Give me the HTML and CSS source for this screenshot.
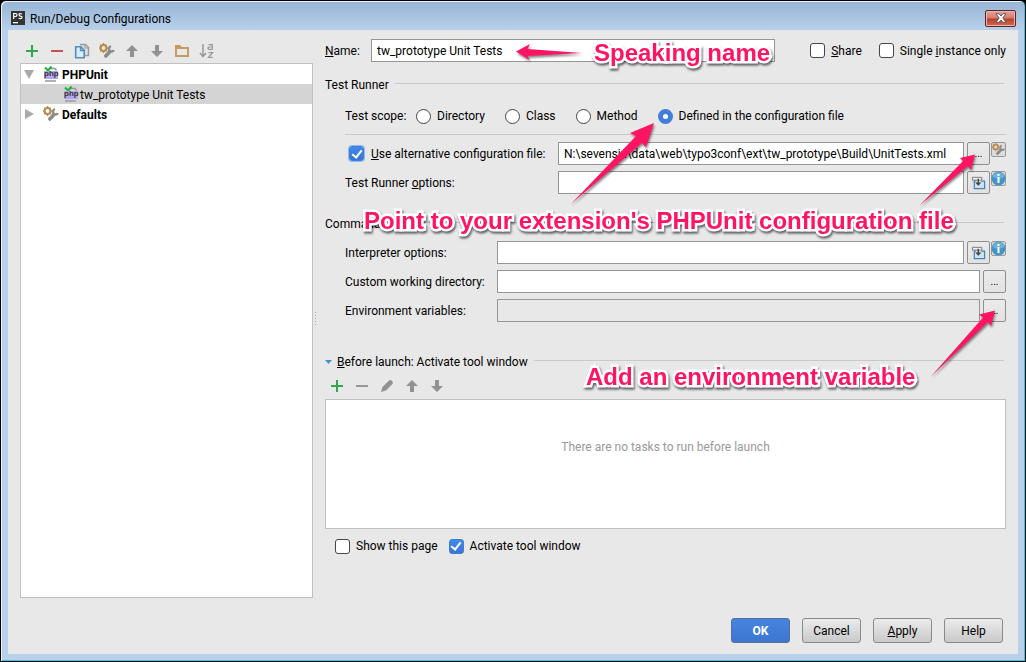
FILE: index.html
```html
<!DOCTYPE html>
<html lang="en">
<head>
<meta charset="utf-8">
<title>Run/Debug Configurations</title>
<link rel="stylesheet" href="styles.css">
</head>
<body>
<svg class="defs" aria-hidden="true">
  <symbol id="i-plus" viewBox="0 0 16 16"><path d="M7 2h2v5h5v2H9v5H7V9H2V7h5z" fill="#2fa64f"/></symbol>
  <symbol id="i-minus" viewBox="0 0 16 16"><path d="M2 7h12v2H2z" fill="currentColor"/></symbol>
  <symbol id="i-copy" viewBox="0 0 16 16"><path d="M6 1.500h5.500l3 3v8H11" fill="#dedede" stroke="#9a9a9a" stroke-width="1.500"/><path d="M11 1.500v3.500h3.500" fill="none" stroke="#9a9a9a"/><path d="M1.700 3.700h5l3.500 3.500v7.600H1.700z" fill="#dcebf5" stroke="#4f8fbd" stroke-width="1.600"/><path d="M6.500 4v3.500H10" fill="none" stroke="#4f8fbd" stroke-width="1.300"/></symbol>
  <symbol id="i-wrench" viewBox="0 0 16 16"><path d="M6.800 13 10.500 9" stroke="#8b8b8b" stroke-width="3.600" stroke-linecap="round"/><path d="M12 3.200a2.700 2.700 0 1 0 3 4" fill="none" stroke="#8b8b8b" stroke-width="2.400"/><circle cx="4.500" cy="5" r="2.900" fill="none" stroke="#b98c4c" stroke-width="2"/><path d="M4.500 0v2M4.500 8v2M0 5h1.500M7.500 5H9M1.300 1.800l1.100 1.100M6.600 7.100l1.100 1.100M7.700 1.800 6.600 2.900M2.400 7.100 1.300 8.200" stroke="#b98c4c" stroke-width="1.500"/></symbol>
  <symbol id="i-up" viewBox="0 0 16 16"><path d="M8 2 14 8H10v6H6V8H2z" fill="#929292"/></symbol>
  <symbol id="i-down" viewBox="0 0 16 16"><path d="M8 14 2 8h4V2h4v6h4z" fill="#929292"/></symbol>
  <symbol id="i-folder" viewBox="0 0 16 16"><path d="M1 2h5.500l1 2H15v10H1zM3 6v6h10V6z" fill="#c79a60" fill-rule="evenodd"/></symbol>
  <symbol id="i-sort" viewBox="0 0 16 16"><path d="M4 1v12M1 10l3 3.500L7 10" fill="none" stroke="#999" stroke-width="1.500"/><path d="M9.500 1.700h3.800v4.600H10a1 1 0 0 1-1-1V4.800q0-.8 1-.8h3.300M9.500 9.700h4l-4 4.600h4.300" fill="none" stroke="#999" stroke-width="1.200"/></symbol>
  <symbol id="i-pencil" viewBox="0 0 16 16"><path d="M2 14l1.500-5L10 2.500q1.500-1 3 .5t.5 3L7 12.500z" fill="#929292"/></symbol>
  <symbol id="i-expand" viewBox="0 0 16 16"><path d="M1.500 2.500h10v3h-10z" fill="#f0f0f0" stroke="#777"/><path d="M5 6.500H3.500v8h11v-8H11" fill="#cfe1ec" stroke="#3f86b5" stroke-width="1.300"/><path d="M7 4h1.500v4H11l-3.200 3.500L4.500 8H7z" fill="#444"/></symbol>
  <symbol id="i-info" viewBox="0 0 15 15"><rect x=".5" y=".5" width="14" height="14" rx="1.500" fill="#ddd" stroke="#999"/><circle cx="7.500" cy="7.500" r="6.900" fill="#4394c6"/><path d="M1.500 6a6.200 6.200 0 0 1 12 0q-6 3-12 0" fill="#6db0d8"/><path d="M6.500 3h2v2h-2zM6.500 6h2v6h-2z" fill="#fff"/></symbol>
  <symbol id="i-php" viewBox="0 0 14 16"><path d="M5 2.500h6l1.500 2M1 15h11" fill="none" stroke="#999" stroke-width="1.600"/><path d="M1 1.500 4 4.500 7.500.5" fill="none" stroke="#12b92b" stroke-width="2"/><path d="M0 5h14v8H0z" fill="#b4a7f0"/></symbol>
</svg>

<main class="window">
  <header class="titlebar">
    <svg class="logo" viewBox="0 0 14 14"><rect width="14" height="14" fill="#343434"/><path d="M2.700 8V2.500h1.800a1.500 1.500 0 0 1 0 3H2.700M11 3q-3-1-3 .6t2 1.700q1.800.6.700 1.900-1.300.7-3 0" fill="none" stroke="#fff" stroke-width="1.200"/><path d="M2 11h5v1.300H2z" fill="#fff"/></svg>
    <h1 class="title">Run/Debug Configurations</h1>
    <button class="close" aria-label="Close"><svg viewBox="0 0 12 10" width="12" height="10"><path d="M1 .7h3L6 3 8 .7h3L7.800 5 11 9.300H8L6 7 4 9.300H1L4.200 5z" fill="#fff" stroke="#555a68" stroke-width="1"/></svg></button>
  </header>

  <section class="client">
    <div class="body">
      <aside class="sidebar">
        <div class="toolbar">
          <button class="tool" aria-label="Add"><svg><use href="#i-plus"/></svg></button>
          <button class="tool tool-red" aria-label="Remove"><svg><use href="#i-minus"/></svg></button>
          <button class="tool" aria-label="Copy"><svg><use href="#i-copy"/></svg></button>
          <button class="tool" aria-label="Edit defaults"><svg><use href="#i-wrench"/></svg></button>
          <button class="tool" aria-label="Move up"><svg><use href="#i-up"/></svg></button>
          <button class="tool" aria-label="Move down"><svg><use href="#i-down"/></svg></button>
          <button class="tool" aria-label="New folder"><svg><use href="#i-folder"/></svg></button>
          <button class="tool" aria-label="Sort"><svg><use href="#i-sort"/></svg></button>
        </div>
        <ul class="tree">
          <li class="node node-group"><span class="twisty twisty-open"></span><span class="php-icon"><svg class="php-mark"><use href="#i-php"/></svg><span class="php-text">php</span></span><span class="node-text">PHPUnit</span></li>
          <li class="node node-child"><span class="php-icon"><svg class="php-mark"><use href="#i-php"/></svg><span class="php-text">php</span></span><span class="node-text">tw_prototype Unit Tests</span></li>
          <li class="node node-group"><span class="twisty twisty-closed"></span><svg class="node-icon"><use href="#i-wrench"/></svg><span class="node-text">Defaults</span></li>
        </ul>
      </aside>
      <div class="splitter"></div>

      <form class="panel">
        <div class="row name-row">
          <label class="name-label" for="name"><u>N</u>ame:</label>
          <input class="field" id="name" type="text" value="tw_prototype Unit Tests">
          <label class="option"><input type="checkbox" class="check"><span><u>S</u>hare</span></label>
          <label class="option"><input type="checkbox" class="check"><span>Single <u>i</u>nstance only</span></label>
        </div>

        <h2 class="heading runner-heading">Test Runner</h2>
        <div class="indent">
          <div class="scope" role="radiogroup" aria-label="Test scope">
            <span class="scope-label">Test scope:</span>
            <label class="option choice"><input type="radio" name="scope" class="radio">Directory</label>
            <label class="option choice"><input type="radio" name="scope" class="radio">Class</label>
            <label class="option choice"><input type="radio" name="scope" class="radio">Method</label>
            <label class="option choice"><input type="radio" name="scope" class="radio" checked>Defined in the configuration file</label>
          </div>
          <hr class="rule">
          <div class="rows">
            <div class="row wide">
              <label class="row-label option alt"><input type="checkbox" class="check focused" checked><span><u>U</u>se alternative configuration file:</span></label>
              <input class="field" type="text" aria-label="Configuration file" value="N:\sevensix\data\web\typo3conf\ext\tw_prototype\Build\UnitTests.xml">
              <button type="button" class="square">...</button>
              <button type="button" class="mini boxed" aria-label="Settings"><svg><use href="#i-wrench"/></svg></button>
            </div>
            <div class="row wide">
              <label class="row-label" for="ropt">Test Runner <u>o</u>ptions:</label>
              <input class="field" id="ropt" type="text">
              <button type="button" class="square" aria-label="Expand"><svg><use href="#i-expand"/></svg></button>
              <button type="button" class="mini" aria-label="Help"><svg><use href="#i-info"/></svg></button>
            </div>
          </div>
        </div>

        <h2 class="heading command-heading">Command Line</h2>
        <div class="indent rows">
          <div class="row">
            <label class="row-label" for="iopt">Interpreter options:</label>
            <input class="field" id="iopt" type="text">
            <button type="button" class="square" aria-label="Expand"><svg><use href="#i-expand"/></svg></button>
            <button type="button" class="mini" aria-label="Help"><svg><use href="#i-info"/></svg></button>
          </div>
          <div class="row">
            <label class="row-label" for="cwd">Custom working directory:</label>
            <input class="field" id="cwd" type="text">
            <button type="button" class="square">...</button>
          </div>
          <div class="row">
            <label class="row-label" for="env">Environment variables:</label>
            <input class="field readonly" id="env" type="text" readonly>
            <button type="button" class="square">...</button>
          </div>
        </div>

        <h2 class="heading launch-heading"><span class="collapse"></span><span><u>B</u>efore launch: Activate tool window</span></h2>
        <div class="toolbar launch-tools">
          <button type="button" class="tool" aria-label="Add task"><svg><use href="#i-plus"/></svg></button>
          <button type="button" class="tool" aria-label="Remove task"><svg><use href="#i-minus"/></svg></button>
          <button type="button" class="tool" aria-label="Edit task"><svg><use href="#i-pencil"/></svg></button>
          <button type="button" class="tool" aria-label="Move task up"><svg><use href="#i-up"/></svg></button>
          <button type="button" class="tool" aria-label="Move task down"><svg><use href="#i-down"/></svg></button>
        </div>
        <div class="tasks">There are no tasks to run before launch</div>
        <div class="launch-options">
          <label class="option"><input type="checkbox" class="check">Show this page</label>
          <label class="option"><input type="checkbox" class="check" checked>Activate tool window</label>
        </div>
      </form>
    </div>

    <footer class="actions">
      <button class="action primary">OK</button>
      <button class="action">Cancel</button>
      <button class="action"><span><u>A</u>pply</span></button>
      <button class="action">Help</button>
    </footer>
  </section>

  <svg class="arrows" width="1026" height="662" viewBox="0 0 1026 662" aria-hidden="true">
    <path d="M516 51.500 530 44 527.500 49 582 53 527.500 56 529.500 60z"/>
    <path d="M654 123 630 133 636 136 571 204 642 143 646 147z"/>
    <path d="M975 154.500 960 158 963 161 919.500 205.500 968 166 971 170z"/>
    <path d="M995 310.500 979 314.500 983 317.500 930.500 377 988 322 991 326z"/>
  </svg>
  <p class="callout callout-name">Speaking name</p>
  <p class="callout callout-config">Point to your extension's PHPUnit configuration file</p>
  <p class="callout callout-env">Add an environment variable</p>
</main>
</body>
</html>
```
FILE: styles.css
```css
* { box-sizing: border-box; }

body {
  margin: 0;
  background: #000;
  color: #000;
  font: 12px/16px Roboto, "Noto Sans", sans-serif;
}

button, input { font: inherit; color: inherit; margin: 0; }
button { padding: 0; border: 0; background: none; }
svg { display: block; }
.defs { display: none; }

.window {
  position: relative;
  display: flex;
  flex-direction: column;
  min-height: 100vh;
  padding: 1px 7px 7px;
  border: 1px solid #000;
  border-radius: 6px 6px 0 0;
  background: linear-gradient(#98b5d7, #b9d1ea 30px) #b9d1ea;
  box-shadow: inset 1px 1px #eef6fd, inset -1px -1px #2ccbe8;
}

.titlebar { display: flex; align-items: center; height: 28px; padding: 4px 2px 0 3px; }
.logo { width: 14px; height: 14px; margin-right: 5px; }
.title { flex: 1; margin: 0; padding-top: 2px; font-size: 12px; font-weight: 400; }
.close {
  display: grid;
  place-items: center;
  width: 31px;
  height: 17px;
  border: 1px solid #5a2430;
  border-radius: 2px;
  background: linear-gradient(#e3a498, #d27c6c 48%, #b83f2b 52%, #cf6c50);
  box-shadow: inset 0 0 0 1px #e9b5aa;
}

.client { flex: 1; display: flex; flex-direction: column; padding: 8px 12px 11px; background: #e8e8e8; }
.body { flex: 1; display: flex; }

.sidebar { display: flex; flex-direction: column; flex: 0 0 293px; }
.toolbar { display: flex; align-items: center; gap: 9px; height: 25px; padding-left: 4px; }
.tool { width: 16px; height: 16px; color: #999; }
.tool-red { color: #c75450; }
.tool svg, .node-icon { width: 16px; height: 16px; }

.tree { flex: 1; margin: 0; padding: 0; list-style: none; background: #fff; border: 1px solid #c0c0c0; }
.node { display: flex; align-items: center; height: 20px; padding-left: 3px; }
.node-group { font-weight: 700; }
.node-child { padding-left: 43px; background: #d4d4d4; }
.node-text { padding-top: 2px; }
.node-icon { margin: 0 3px 0 9px; }
.twisty { width: 10px; height: 10px; background: #aaa; }
.twisty-open { clip-path: polygon(0 10%, 100% 10%, 50% 100%); }
.twisty-closed { clip-path: polygon(10% 0, 100% 50%, 10% 100%); }
.php-icon { display: grid; width: 14px; height: 16px; margin-right: 2px; }
.twisty + .php-icon { margin: 0 4px 0 10px; }
.php-mark { grid-area: 1 / 1; width: 14px; height: 16px; }
.php-text { grid-area: 1 / 1; padding-top: 4px; color: #333; font: 700 8px/8px "Liberation Sans", sans-serif; text-align: center; z-index: 1; }

.splitter {
  flex: 0 0 12px;
  align-self: center;
  height: 15px;
  background: radial-gradient(circle, #aaa 1px, transparent 1px) 1px 0 / 3px 3px repeat-y;
}

.panel { flex: 1; min-width: 0; padding-top: 1px; }
.row { display: flex; align-items: center; height: 23px; }
.rows { display: grid; gap: 6px; }
.indent { margin-left: 20px; }
.row-label { flex: 0 0 152px; white-space: nowrap; }
.wide .row-label { flex-basis: 213px; }
.field {
  flex: 1;
  min-width: 0;
  height: 23px;
  padding: 0 5px;
  border: 1px solid #969696;
  border-radius: 0;
  background: #fff;
  outline: 0;
}
.readonly { background: #e8e8e8; }
.name-label { flex: 0 0 46px; }
.name-row .option { margin-left: 17px; white-space: nowrap; }
.name-row .field + .option { margin-left: 35px; }

.square {
  display: grid;
  place-items: center;
  width: 23px;
  height: 23px;
  margin-left: 3px;
  border: 1px solid #8e8e8e;
  border-radius: 2px;
  background: linear-gradient(#ebebeb, #e2e2e2);
  font-size: 10px;
  line-height: 12px;
}
.square svg, .mini svg { width: 15px; height: 15px; }
.mini { align-self: flex-start; width: 15px; height: 15px; margin-left: 1px; }
.boxed { border: 1px solid #999; border-radius: 2px; background: #ddd; }
.boxed svg { width: 13px; height: 13px; }

.heading { display: flex; align-items: center; height: 16px; margin: 0; font-size: 12px; font-weight: 400; white-space: nowrap; }
.heading::after { content: ""; flex: 1; height: 1px; margin: 0 2px 4px 6px; background: #c9c9c9; }
.runner-heading { margin: 15px 0; }
.command-heading { margin: 22px 0 9px; }
.launch-heading { margin: 32px 0 8px; }
.collapse { width: 7px; height: 4px; margin-right: 5px; background: #4394c6; clip-path: polygon(0 0, 100% 0, 50% 100%); }

.scope { display: flex; height: 16px; white-space: nowrap; }
.scope-label { flex: 0 0 71px; }
.option { display: flex; align-items: center; gap: 6px; }
.choice { margin-right: 20px; }
.rule { height: 1px; margin: 10px 0 7px; border: 0; background: #c9c9c9; }

.check, .radio {
  flex: none;
  appearance: none;
  width: 15px;
  height: 15px;
  border: 1px solid #444;
  border-radius: 3px;
  background: #fff;
}
.radio { border-radius: 50%; }
.check:checked {
  display: grid;
  place-items: center;
  border-color: #3d80dc;
  background: linear-gradient(#4289ea, #3a74d0);
}
.check:checked::before { content: ""; width: 4px; height: 8px; margin-bottom: 2px; border: solid #fff; border-width: 0 2px 2px 0; transform: rotate(38deg); }
.radio:checked { border: 5px solid #437ddb; }
.alt { padding-left: 4px; gap: 7px; }
.focused { box-shadow: 0 0 0 1px #8ebcf1; }

.launch-tools { height: 16px; }
.tasks {
  height: 130px;
  margin-top: 5px;
  padding-top: 39px;
  border: 1px solid #c0c0c0;
  background: #fff;
  color: #999;
  text-align: center;
}
.launch-options { display: flex; gap: 11px; margin: 9px 0 0 10px; }

.actions { display: flex; justify-content: flex-end; gap: 12px; padding: 20px 3px 0 0; }
.action {
  width: 59px;
  height: 25px;
  border: 1px solid #8a8a8a;
  border-radius: 3px;
  background: linear-gradient(#ececec, #c9c9c9);
}
.primary { border-color: #566f96; background: linear-gradient(#4484e0, #3f76d0); color: #fff; font-weight: 700; }

.arrows {
  position: absolute;
  top: -1px;
  left: -1px;
  fill: #ff1463;
  filter: drop-shadow(1px 2px 1px #0007);
  pointer-events: none;
}
.callout {
  position: absolute;
  margin: 0;
  color: #ff1463;
  font: 700 24px/28px "Liberation Sans", sans-serif;
  white-space: nowrap;
  paint-order: stroke fill;
  -webkit-text-stroke: 5px #fff;
  filter: drop-shadow(1px 2px 1px #0009);
  pointer-events: none;
}
.callout-name { top: 38px; left: 593px; }
.callout-config { top: 206px; left: 363px; }
.callout-env { top: 362px; left: 585px; }
```
